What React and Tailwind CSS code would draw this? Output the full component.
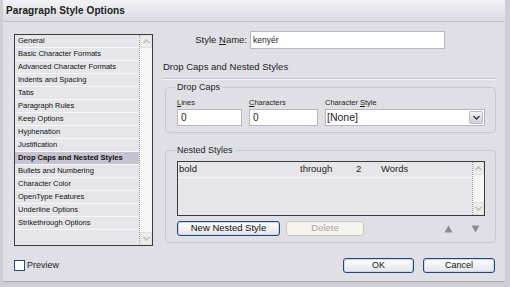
import React from "react";

const items = [
  "General",
  "Basic Character Formats",
  "Advanced Character Formats",
  "Indents and Spacing",
  "Tabs",
  "Paragraph Rules",
  "Keep Options",
  "Hyphenation",
  "Justification",
  "Drop Caps and Nested Styles",
  "Bullets and Numbering",
  "Character Color",
  "OpenType Features",
  "Underline Options",
  "Strikethrough Options",
];

const Chevron = ({ up, color = "#b8b8c4" }) => (
  <svg width="7" height="5" viewBox="0 0 7 5">
    <path
      d={up ? "M0.5 4 L3.5 1 L6.5 4" : "M0.5 1 L3.5 4 L6.5 1"}
      fill="none"
      stroke={color}
      strokeWidth="1.3"
    />
  </svg>
);

const ScrollBar = ({ className }) => (
  <div className={"flex flex-col justify-between bg-[#f6f6f4] border-l border-dotted border-[#9a9aa0] " + className}>
    <div className="h-[13px] bg-[#ecece8] border border-[#e0e0dc] flex items-center justify-center">
      <Chevron up />
    </div>
    <div className="h-[13px] bg-[#ecece8] border border-[#e0e0dc] flex items-center justify-center">
      <Chevron />
    </div>
  </div>
);

const Button = ({ children, className = "", disabled }) => (
  <div
    className={
      "flex items-center justify-center rounded-[3px] border " +
      (disabled
        ? "border-[#c9c7ba] bg-[#f4f3ee] text-[#aca899] "
        : "border-[#27456e] bg-gradient-to-b from-[#ffffff] to-[#e4e3ea] text-[#111] shadow-[inset_0_0_0_1px_#c6d7f3] ") +
      className
    }
  >
    {children}
  </div>
);

const Group = ({ title, className, children }) => (
  <div className={"relative rounded-[4px] border border-[#c9c8d0] " + className}>
    <div className="absolute left-[9px] top-[-7px] bg-[#e0dfe5] px-[2px] text-[9px] leading-[12px] text-[#1e1e1e]">
      {title}
    </div>
    {children}
  </div>
);

export default function App() {
  return (
    <div
      className="w-[510px] h-[287px] flex flex-col bg-[#e0dfe5] border-l-[3px] border-r-[5px] border-b-[5px] border-[#cfced6] text-[#1e1e1e] overflow-hidden"
      style={{ fontFamily: '"Liberation Sans", Arial, sans-serif' }}
    >
      <div className="h-[22px] flex items-center pl-[3px] bg-gradient-to-b from-[#f2f2f6] to-[#d9d9e1] border-b border-[#c0c0c8] shrink-0">
        <span className="text-[10px] font-bold tracking-[0.1px] text-[#202020]">Paragraph Style Options</span>
      </div>

      <div className="flex-1 flex flex-col pt-[9px] border-b border-[#a8a8b0]">
        <div className="flex">
          <div className="pl-[11px] mt-[3px]">
            <div className="w-[139px] h-[212px] border border-[#3a3a40] flex bg-[#e6e5ea]">
              <div className="flex-1 flex flex-col">
                {items.map((it) => (
                  <div
                    key={it}
                    className={
                      "h-[13px] shrink-0 border-b border-[#f6f6f8] pl-[3px] text-[7.5px] leading-[12px] whitespace-nowrap text-[#101010] " +
                      (it === "Drop Caps and Nested Styles" ? "bg-[#c4c3cf] font-bold" : "")
                    }
                  >
                    {it}
                  </div>
                ))}
              </div>
              <ScrollBar className="w-[13px]" />
            </div>
          </div>

          <div className="ml-[10px] w-[333px] flex flex-col">
            <div className="flex items-center h-[18px]">
              <div className="w-[84px] text-right text-[9.5px]">
                Style <span className="underline">N</span>ame:
              </div>
              <div className="ml-[3px] w-[195px] h-[18px] bg-white border border-[#b4b8c2] pl-[2px] text-[8.5px] leading-[16px]">
                kenyér
              </div>
            </div>

            <div className="mt-[12px] h-[12px] text-[9.5px] leading-[12px]">Drop Caps and Nested Styles</div>
            <div className="mt-[5px] border-t border-[#c4c3cb] border-b border-b-[#f4f4f6]" />

            <Group title="Drop Caps" className="mt-[7px] ml-[2px] h-[46px]">
              <div className="flex gap-[7px] pl-[11px] pt-[10px]">
                <div className="flex flex-col">
                  <span className="text-[7.5px] leading-[10px]">
                    <span className="underline">L</span>ines
                  </span>
                  <div className="mt-[1px] w-[65px] h-[17px] bg-white border border-[#b4b8c2] pl-[3px] text-[10px] leading-[15px]">0</div>
                </div>
                <div className="flex flex-col">
                  <span className="text-[7.5px] leading-[10px]">
                    <span className="underline">C</span>haracters
                  </span>
                  <div className="mt-[1px] w-[69px] h-[17px] bg-white border border-[#b4b8c2] pl-[3px] text-[10px] leading-[15px]">0</div>
                </div>
                <div className="flex flex-col">
                  <span className="text-[7.5px] leading-[10px]">
                    Character <span className="underline">S</span>tyle
                  </span>
                  <div className="mt-[1px] w-[160px] h-[17px] bg-white border border-[#b4b8c2] flex">
                    <span className="flex-1 pl-[1px] text-[10.5px] leading-[15px]">[None]</span>
                    <div className="w-[14px] m-[1px] rounded-[2px] bg-gradient-to-b from-[#f4f4f8] to-[#cfd0da] border border-[#b6b8c6] flex items-center justify-center">
                      <Chevron color="#303040" />
                    </div>
                  </div>
                </div>
              </div>
            </Group>

            <Group title="Nested Styles" className="mt-[17px] ml-[2px] h-[93px]">
              <div className="pl-[11px] pt-[10px]">
                <div className="w-[308px] h-[55px] border border-[#3a3a40] bg-[#e6e5ea] flex">
                  <div className="flex-1">
                    <div className="h-[16px] border-b border-[#f6f6f8] flex items-center text-[9.5px] pl-[1px]">
                      <span className="w-[121px] shrink-0">bold</span>
                      <span className="w-[56px] shrink-0">through</span>
                      <span className="w-[25px] shrink-0">2</span>
                      <span>Words</span>
                    </div>
                  </div>
                  <ScrollBar className="w-[12px]" />
                </div>
                <div className="flex items-center mt-[5px]">
                  <Button className="w-[103px] h-[15px] text-[9.5px]">New Nested Style</Button>
                  <Button disabled className="ml-[6px] w-[78px] h-[15px] text-[9.5px]">Delete</Button>
                  <svg className="ml-[80px]" width="9" height="8" viewBox="0 0 9 8">
                    <path d="M4.5 0.5 L8.5 7.5 L0.5 7.5 Z" fill="#8a8a90" />
                  </svg>
                  <svg className="ml-[18px]" width="9" height="8" viewBox="0 0 9 8">
                    <path d="M0.5 0.5 L8.5 0.5 L4.5 7.5 Z" fill="#8a8a90" />
                  </svg>
                </div>
              </div>
            </Group>
          </div>
        </div>

        <div className="flex items-center mt-[12px] h-[15px] pl-[11px] pr-[10px]">
          <div className="w-[11px] h-[11px] bg-white border border-[#1c5180]" />
          <span className="ml-[2px] text-[9px]">Preview</span>
          <div className="flex-1" />
          <Button className="w-[71px] h-[15px] text-[9px]">OK</Button>
          <Button className="ml-[9px] w-[72px] h-[15px] text-[9px]">Cancel</Button>
        </div>
      </div>
    </div>
  );
}
